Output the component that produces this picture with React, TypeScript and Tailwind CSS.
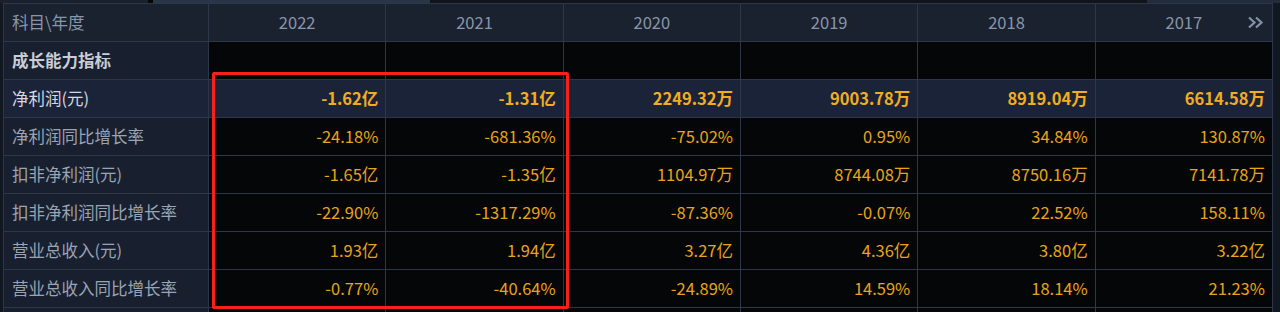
import React from "react";

const years = ["2022", "2021", "2020", "2019", "2018", "2017"];

type Row = { label: string; values: string[]; kind: "section" | "highlight" | "normal" | "blank" };

const rows: Row[] = [
  { label: "成长能力指标", values: ["", "", "", "", "", ""], kind: "section" },
  { label: "净利润(元)", values: ["-1.62亿", "-1.31亿", "2249.32万", "9003.78万", "8919.04万", "6614.58万"], kind: "highlight" },
  { label: "净利润同比增长率", values: ["-24.18%", "-681.36%", "-75.02%", "0.95%", "34.84%", "130.87%"], kind: "normal" },
  { label: "扣非净利润(元)", values: ["-1.65亿", "-1.35亿", "1104.97万", "8744.08万", "8750.16万", "7141.78万"], kind: "normal" },
  { label: "扣非净利润同比增长率", values: ["-22.90%", "-1317.29%", "-87.36%", "-0.07%", "22.52%", "158.11%"], kind: "normal" },
  { label: "营业总收入(元)", values: ["1.93亿", "1.94亿", "3.27亿", "4.36亿", "3.80亿", "3.22亿"], kind: "normal" },
  { label: "营业总收入同比增长率", values: ["-0.77%", "-40.64%", "-24.89%", "14.59%", "18.14%", "21.23%"], kind: "normal" },
  { label: "", values: ["", "", "", "", "", ""], kind: "blank" },
];

export default function App() {
  return (
    <div
      className="relative w-[1280px] h-[312px] overflow-hidden bg-[#121822]"
      style={{ fontFamily: '"Noto Sans CJK SC", "Noto Sans", sans-serif' }}
    >
      {/* top strip */}
      <div className="flex h-[3px]">
        <div className="w-[148px] bg-[#1a212c]" />
        <div className="w-[5px] bg-[#050608]" />
        <div className="w-[277px] bg-[#2a3547]" />
        <div className="w-[717px] bg-[#10151d]" />
        <div className="flex-1 bg-[#222c3a]" />
      </div>

      <div className="ml-[3px] w-[1270px] border border-[#2c384a] bg-[#2c384a] grid grid-cols-[204px_repeat(6,1fr)] gap-px text-[16.5px] leading-none">
        {/* header */}
        <div className="h-[37px] bg-[#1a2230] flex items-center pl-[8px] text-[#8996aa]">科目\年度</div>
        {years.map((y, i) => (
          <div key={y} className="relative h-[37px] bg-[#1a2230] flex items-center justify-center text-[#8996aa]">
            {y}
            {i === 5 && (
              <svg className="absolute right-[8px] top-[12px]" width="17" height="13" viewBox="0 0 17 13" fill="none" stroke="#8592a5" strokeWidth="2.2">
                <path d="M2 1.5 L7.5 6.5 L2 11.5" />
                <path d="M9 1.5 L14.5 6.5 L9 11.5" />
              </svg>
            )}
          </div>
        ))}

        {rows.map((r, ri) => (
          <React.Fragment key={ri}>
            <div
              className={
                "h-[37px] flex items-center pl-[8px] " +
                (r.kind === "highlight" ? "bg-[#1b2339] text-[#d4d9e2]" : "bg-[#182030] text-[#9aa4b2]") +
                (r.kind === "section" ? " font-bold text-[#c9ced6]" : "")
              }
            >
              {r.label}
            </div>
            {r.values.map((v, vi) => (
              <div
                key={vi}
                className={
                  "h-[37px] flex items-center justify-end pr-[7px] " +
                  (r.kind === "highlight"
                    ? "bg-[#1b2339] text-[#f2ad1f] font-bold"
                    : "bg-[#050607] text-[#e8a41a]")
                }
              >
                {v}
              </div>
            ))}
          </React.Fragment>
        ))}
      </div>

      {/* red highlight box */}
      <div className="absolute left-[212px] top-[72px] w-[357px] h-[237px] border-[3px] border-[#f5221b] rounded-[2px] pointer-events-none" />
    </div>
  );
}
